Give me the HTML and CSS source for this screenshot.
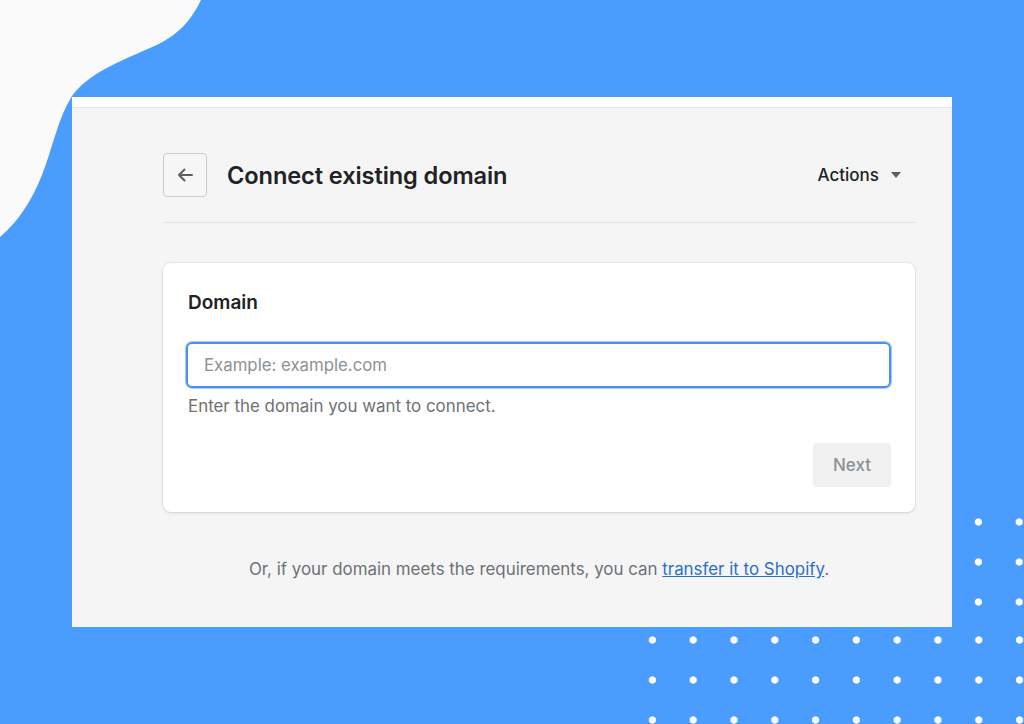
FILE: index.html
```html
<!DOCTYPE html>
<html lang="en">
<head>
<meta charset="utf-8">
<title>Connect existing domain</title>
<link rel="stylesheet" href="styles.css">
</head>
<body>
<svg class="blob" width="210" height="240" viewBox="0 0 210 240" aria-hidden="true">
  <path d="M0 0 H201 C190 22 178 36 150 48 C118 62 88 74 72 96 C58 118 52 150 42 175 C32 200 18 222 0 237 Z" fill="#fafafa"/>
</svg>
<div class="dots dots-side"></div>
<div class="dots dots-bottom"></div>

<main class="panel">
  <div class="panel-inner">
    <header class="page-header">
      <button class="back-btn" aria-label="Back">
        <svg width="20" height="20" viewBox="0 0 20 20"><path d="M17 10H4M9.5 4.5 4 10l5.5 5.5" fill="none" stroke="#5c5f62" stroke-width="2" stroke-linecap="round" stroke-linejoin="round"/></svg>
      </button>
      <h1 class="title">Connect existing domain</h1>
      <div class="actions">Actions <span class="caret"></span></div>
    </header>
    <hr class="divider">

    <section class="card">
      <h2 class="card-title">Domain</h2>
      <div class="input">Example: example.com</div>
      <p class="help">Enter the domain you want to connect.</p>
      <div class="card-footer">
        <button class="next-btn">Next</button>
      </div>
    </section>

    <p class="footnote">Or, if your domain meets the requirements, you can <a href="#">transfer it to Shopify</a>.</p>
  </div>
</main>
</body>
</html>
```
FILE: styles.css
```css
* { box-sizing: border-box; }
html, body { margin: 0; padding: 0; }
body {
  width: 1024px;
  height: 724px;
  overflow: hidden;
  background: #4a9dfc;
  position: relative;
  font-family: Inter, "Noto Sans", "Liberation Sans", sans-serif;
  color: #202223;
  padding: 97px 0 0 72px;
}
.blob { position: absolute; left: 0; top: 0; }
.dots {
  position: absolute;
  background-image: radial-gradient(circle, #ffffff 3.3px, rgba(255,255,255,0) 4px);
  background-size: 40.8px 40px;
}
.dots-side { left: 958px; top: 502px; width: 66px; height: 118px; }
.dots-bottom { left: 632px; top: 620px; width: 392px; height: 104px; }

.panel {
  position: relative;
  width: 880px;
  height: 530px;
  background: #f5f5f5;
  border-top: 10px solid #ffffff;
}
.panel-inner {
  border-top: 1px solid #e4e5e7;
  padding: 45px 37px 0 91px;
}
.page-header {
  display: flex;
  align-items: center;
  height: 44px;
}
.back-btn {
  width: 44px;
  height: 44px;
  border: 1px solid #c9cccf;
  border-radius: 4px;
  background: #f6f6f7;
  display: flex;
  align-items: center;
  justify-content: center;
  padding: 0;
}
.title {
  margin: 0 0 0 20px;
  font-size: 23.6px;
  font-weight: 600;
  letter-spacing: -0.1px;
  flex: 1;
  color: #202223;
}
.actions {
  font-size: 17px;
  font-weight: 500;
  color: #202223;
  display: flex;
  align-items: center;
  margin-right: 14px;
}
.caret {
  display: inline-block;
  width: 0; height: 0;
  border-left: 5px solid transparent;
  border-right: 5px solid transparent;
  border-top: 6px solid #5c5f62;
  margin-left: 12px;
}
.divider {
  border: 0;
  border-top: 1px solid #e1e3e5;
  margin: 25px 0 0;
}
.card {
  margin-top: 40px;
  background: #ffffff;
  border-radius: 8px;
  box-shadow: 0 0 0 1px rgba(63,63,68,0.05), 0 1px 3px rgba(63,63,68,0.15);
  padding: 28px 24px 25px 25px;
}
.card-title {
  margin: 0;
  font-size: 19px;
  font-weight: 600;
  line-height: 24px;
}
.input {
  margin-top: 27px;
  margin-left: -2px;
  height: 46px;
  border: 2px solid #4b8ff0;
  border-radius: 6px;
  box-shadow: 0 0 0 1px #a9cbfa;
  padding: 0 16px;
  display: flex;
  align-items: center;
  font-size: 16.8px;
  color: #8c9196;
}
.help {
  margin: 7px 0 0;
  font-size: 16.9px;
  line-height: 22px;
  color: #6d7175;
}
.card-footer {
  display: flex;
  justify-content: flex-end;
  margin-top: 26px;
}
.next-btn {
  width: 78px;
  height: 44px;
  border: 0;
  border-radius: 4px;
  background: #f1f1f1;
  color: #8c9196;
  font-family: inherit;
  font-size: 17px;
  font-weight: 500;
}
.footnote {
  text-align: center;
  margin: 46px 0 0;
  font-size: 16.9px;
  line-height: 22px;
  color: #6d7175;
}
.footnote a { color: #2c6ecb; text-decoration: underline; }
```
